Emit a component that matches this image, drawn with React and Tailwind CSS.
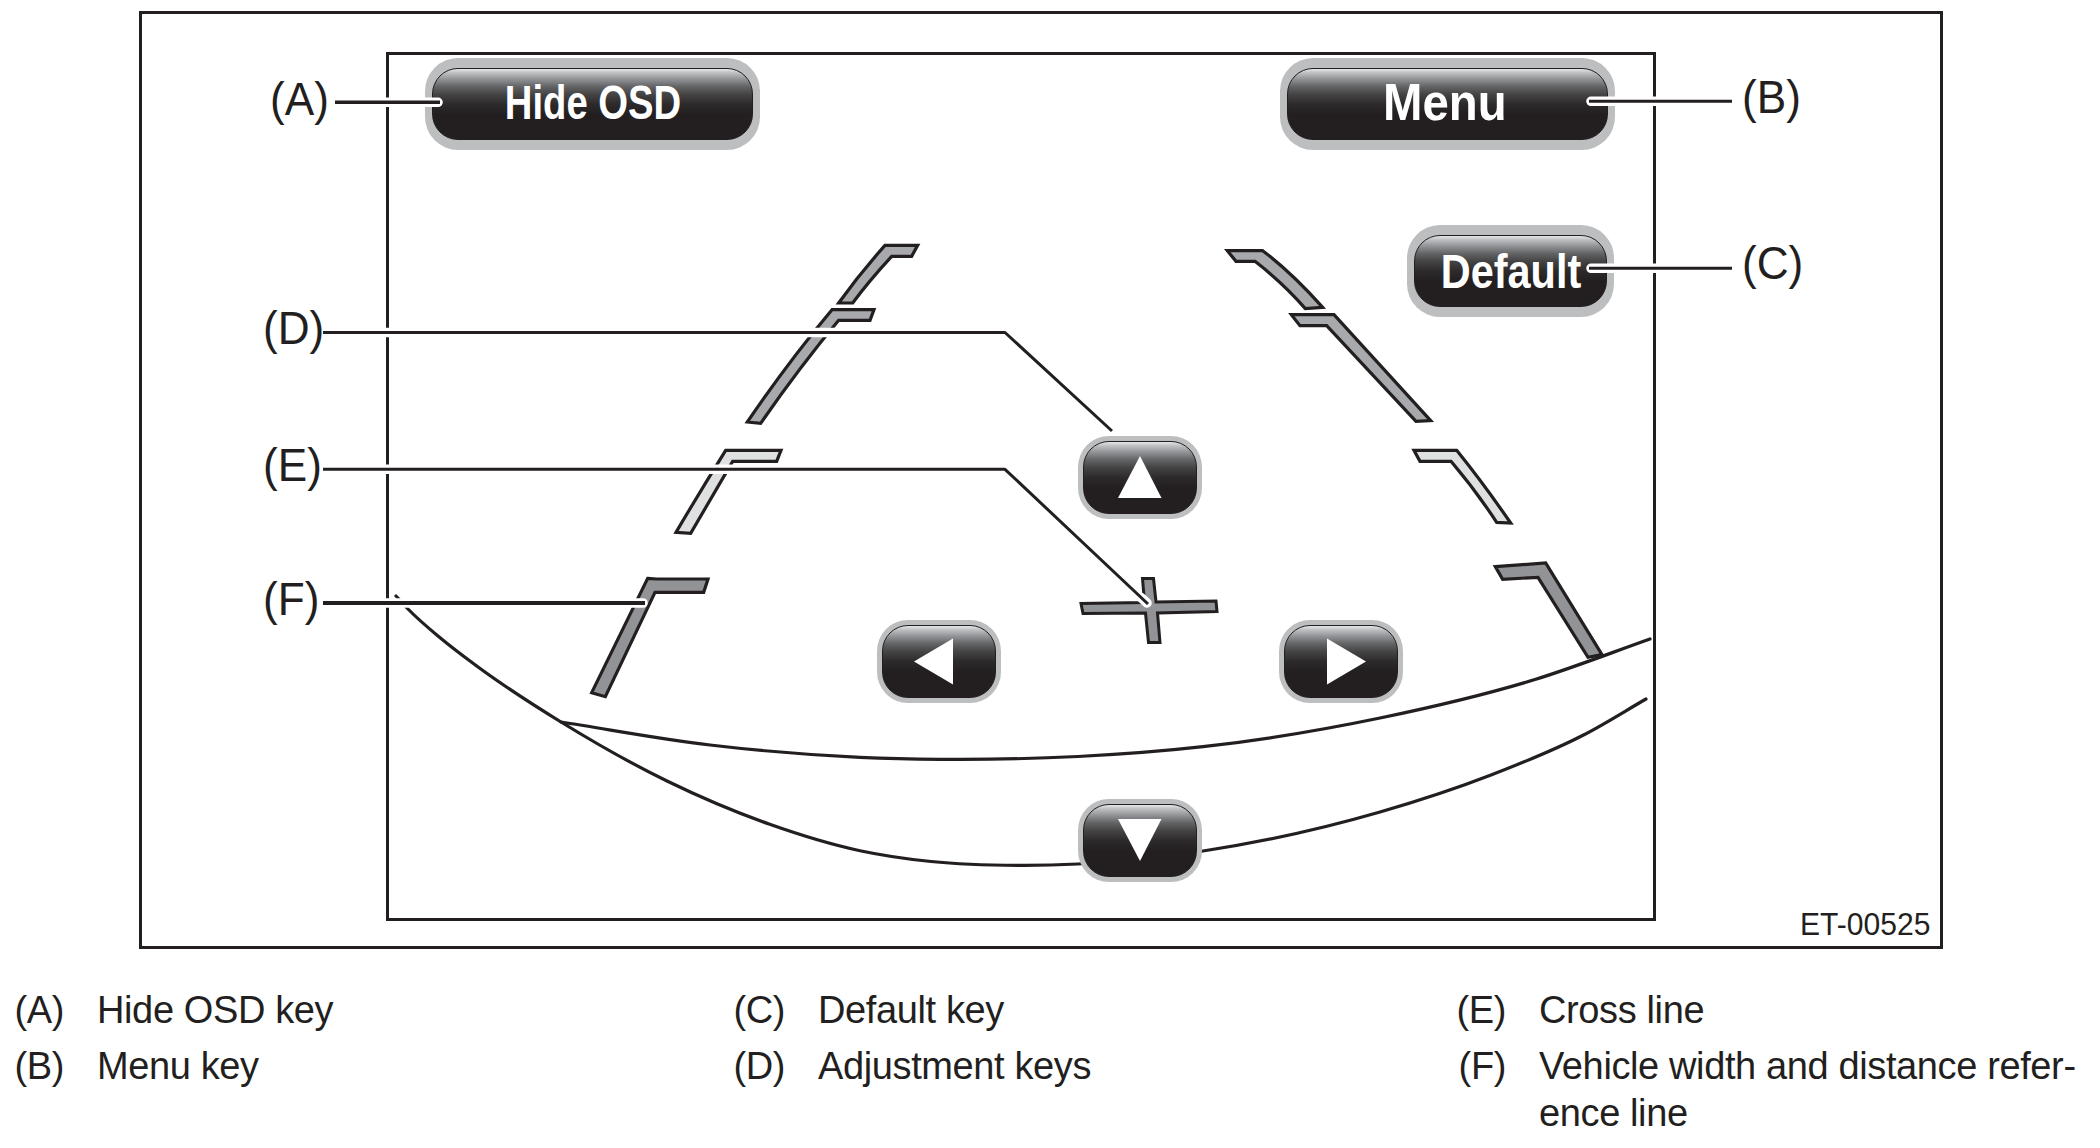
import React from "react";

const INK = "#231f20";

/* Smooth curve through points ordered by x, with slopes weighted by spacing. */
function smooth(points) {
  const seg = points.slice(1).map((p, i) => {
    const dx = p[0] - points[i][0];
    return { dx, s: (p[1] - points[i][1]) / dx };
  });
  const slope = points.map((_, i) => {
    const a = seg[i - 1];
    const b = seg[i];
    if (!a) return b.s;
    if (!b) return a.s;
    return (a.s * b.dx + b.s * a.dx) / (a.dx + b.dx);
  });
  let d = `M${points[0][0]} ${points[0][1]}`;
  seg.forEach(({ dx }, i) => {
    const [x1, y1] = points[i];
    const [x2, y2] = points[i + 1];
    const h = dx / 3;
    d += `C${x1 + h} ${y1 + slope[i] * h} ${x2 - h} ${y2 - slope[i + 1] * h} ${x2} ${y2}`;
  });
  return d;
}

const bumperUpper = smooth([
  [561, 722], [710, 745], [860, 757.3], [940, 759.3], [1078, 756.5],
  [1203, 746.7], [1380, 718], [1535, 679.5], [1650, 639],
]);
const bumperLower = smooth([
  [396, 596], [408, 609], [441, 638.5], [476, 665.5], [561, 722], [667, 781], [769, 824], [860, 850.7],
  [931, 861.5], [1021, 865.3], [1078, 864], [1203, 851], [1380, 812],
  [1491, 775], [1583.5, 735], [1646, 699],
]);

const leftGuides = [
  ["#a7a9ac", "M975 76H1073L1055 109H995Q925 185 878 249H836Q900 160 975 76Z"],
  ["#a7a9ac", "M816 269H942L930 301H836Q720 440 602 610L562 606Q685 425 816 269Z"],
  ["#dfe0e1", "M497 691H663L650 724H518L392 940L348 937Q420 815 497 691Z"],
  ["#929396", "M263 1075L290 1077H444L431 1117H285L136 1430L95 1418Z"],
];
const rightGuides = [
  ["#a7a9ac", "M82 92H188Q275 158 368 262L316 266Q250 190 165 124H108Z"],
  ["#a7a9ac", "M274 284H402L692 602L648 604L380 317H300Z"],
  ["#dfe0e1", "M642 691H770Q850 790 932 909L890 907Q830 815 753 724H660Z"],
  ["#929396", "M886 1040L1037 1029L1206 1304L1164 1312L1014 1072L908 1078Z"],
];

const leaders = [
  ["M335 102.3H440", 3.4],
  ["M1732 101.3H1589", 3],
  ["M1732 268.3H1589", 3],
  ["M323 332.5H1005L1112 431", 3],
  ["M323 469.3H1005L1148 604", 3],
  ["M323 603H645", 4],
];

function Scene() {
  return (
    <svg className="absolute inset-0 h-full w-full" viewBox="142 14 1798 932" fill="none">
      <g stroke={INK} strokeWidth="3.2" strokeLinecap="round">
        <path d={bumperUpper} />
        <path d={bumperLower} />
      </g>
      <g stroke={INK} strokeWidth="9.6">
        <g transform="translate(560 220) scale(0.33333)">
          {leftGuides.map(([fill, d]) => <path key={d} d={d} fill={fill} />)}
        </g>
        <g transform="translate(1200 220) scale(0.33333)">
          {rightGuides.map(([fill, d]) => <path key={d} d={d} fill={fill} />)}
        </g>
      </g>
      <path
        d="M1142.5 578.5H1153.5L1156 602L1216 601L1217 611.5L1157.5 613L1160 642.5H1148.5L1145.5 613L1083 613.5L1081 603.5L1144.5 602.5Z"
        fill="#929396" stroke={INK} strokeWidth="3"
      />
    </svg>
  );
}

function Leaders() {
  return (
    <svg className="pointer-events-none absolute inset-0 h-full w-full" viewBox="142 14 1798 932" fill="none">
      <path d="M380 102.3H438M1664 101.3H1591M1664 268.3H1591M380 332.5H900M380 469.3H900M380 603H643M1141 597.5L1147 603" stroke="#fff" strokeWidth="9.6" strokeLinecap="round" />
      {leaders.map(([d, w]) => <path key={d} d={d} stroke={INK} strokeWidth={w} strokeLinejoin="round" />)}
    </svg>
  );
}

const FACE =
  "flex h-full w-full items-center justify-center border border-[#231f20] bg-[linear-gradient(#e6e7e8_0%,#c0c2c4_5%,#939598_14%,#636466_25%,#454445_36%,#2d2a2b_50%,#231f20_65%)] text-white";

function TextKey({ place, text, children }) {
  return (
    <button className={`absolute h-[92px] rounded-[33px] bg-[#bcbec0] px-[7px] py-[10px] ${place}`}>
      <span className={`${FACE} rounded-[26px]`}>
        <span className={`whitespace-nowrap font-bold leading-none ${text}`}>{children}</span>
      </span>
    </button>
  );
}

function ArrowKey({ place, label, points }) {
  return (
    <button aria-label={label} className={`absolute h-[83px] w-[124px] rounded-[31px] bg-[#bcbec0] p-[5px] ${place}`}>
      <span className={`${FACE} rounded-[26px]`}>
        <svg className="h-[50px] w-[50px] -translate-y-px" viewBox="0 0 50 50">
          <polygon points={points} fill="#fff" />
        </svg>
      </span>
    </button>
  );
}

const callouts = [
  ["(A)", "left-[128px] top-[62px]"],
  ["(B)", "left-[1600px] top-[60px]"],
  ["(C)", "left-[1600px] top-[226px]"],
  ["(D)", "left-[121px] top-[291px]"],
  ["(E)", "left-[121px] top-[428px]"],
  ["(F)", "left-[121px] top-[562px]"],
];

const legend = [
  [["(A)", "Hide OSD key"], ["(B)", "Menu key"]],
  [["(C)", "Default key"], ["(D)", "Adjustment keys"]],
  [["(E)", "Cross line"], ["(F)", <>Vehicle width and distance refer-<br />ence line</>]],
];

export default function App() {
  return (
    <main className="h-[1148px] w-[2100px] overflow-hidden bg-white pt-[11px] font-['Liberation_Sans',Arial,sans-serif] text-[#231f20]">
      <figure className="relative ml-[139px] h-[938px] w-[1804px] border-[3px] border-[#231f20]">
        <div className="ml-[244px] mt-[38px] h-[869px] w-[1270px] border-[3px] border-[#231f20]" />
        <Scene />
        <TextKey place="left-[283px] top-[44px] w-[335px]" text="text-[49px] scale-x-[0.78] -translate-y-[2px]">Hide OSD</TextKey>
        <TextKey place="left-[1138px] top-[44px] w-[335px]" text="text-[52px] scale-x-[0.91] -translate-x-[3px] -translate-y-[2px]">Menu</TextKey>
        <TextKey place="left-[1265px] top-[211px] w-[207px]" text="text-[49px] scale-x-[0.845] translate-x-[1px]">Default</TextKey>
        <ArrowKey label="Up" place="left-[936px] top-[422px]" points="25,4 3,46 46.5,46" />
        <ArrowKey label="Left" place="left-[735px] top-[606px]" points="0,25.5 39,2.5 39,48.5" />
        <ArrowKey label="Right" place="left-[1137px] top-[606px]" points="11,2.5 11,48.5 50,25.5" />
        <ArrowKey label="Down" place="left-[936px] top-[785px]" points="3,4 46.5,4 25,46" />
        <Leaders />
        {callouts.map(([text, place]) => (
          <span key={text} className={`absolute origin-left scale-x-[0.96] text-[46px] leading-none ${place}`}>{text}</span>
        ))}
        <figcaption className="absolute bottom-[6px] right-[10px] origin-right scale-x-[0.97] text-[31px] leading-none">ET-00525</figcaption>
      </figure>
      <section className="flex text-[38px] leading-[47px] tracking-[-0.38px]">
        {legend.map((column, i) => (
          <dl key={i} className="mt-[38px] flex w-[721px] shrink-0 flex-col gap-[9px]">
            {column.map(([key, text]) => (
              <div key={key} className="flex gap-[33px]">
                <dt className="w-[64px] text-right">{key}</dt>
                <dd className="whitespace-nowrap">{text}</dd>
              </div>
            ))}
          </dl>
        ))}
      </section>
    </main>
  );
}
